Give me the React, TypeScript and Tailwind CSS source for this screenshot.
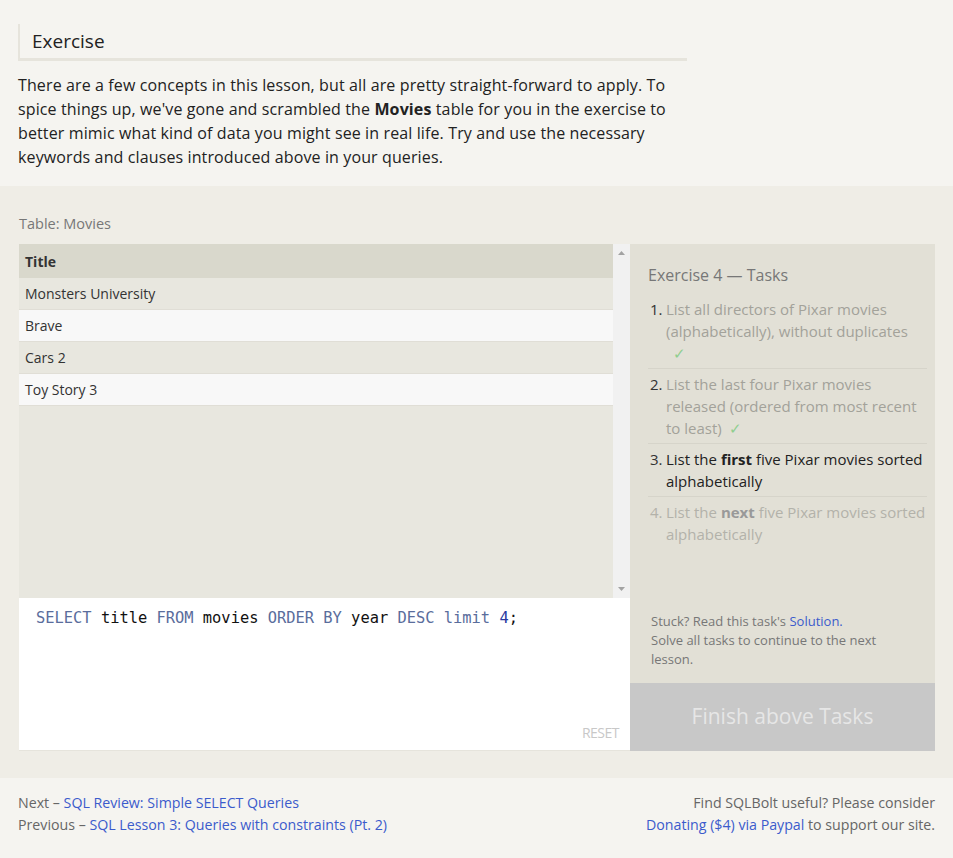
import React from "react";

const font = "font-['Open_Sans',sans-serif]";

export default function App() {
  return (
    <div className={`min-h-[858px] w-[953px] bg-[#efede6] ${font} text-[#222]`}>
      {/* Top intro */}
      <div className="h-[186px] bg-[#f5f4f0] px-[18px] pt-[24px]">
        <div className="w-[669px] border-l-[2px] border-b-[3px] border-[#e6e4dc] pl-[12px] pt-[4px] pb-[4px]">
          <h2 className="text-[19px] leading-[26px] text-[#222]">Exercise</h2>
        </div>
        <p className="mt-[12px] w-[672px] text-[16px] leading-[24px] tracking-[0.12px] text-[#222]">
          There are a few concepts in this lesson, but all are pretty straight-forward to apply. To spice things up, we've gone and scrambled the <b>Movies</b> table for you in the exercise to better mimic what kind of data you might see in real life. Try and use the necessary keywords and clauses introduced above in your queries.
        </p>
      </div>

      {/* Exercise widget */}
      <div className="px-[19px] pt-[28px] pb-[27px]">
        <div className="text-[14.5px] leading-[20px] text-[#777]">Table: Movies</div>
        <div className="mt-[10px] flex h-[507px] w-[916px]">
          {/* Left: table + editor */}
          <div className="flex w-[611px] flex-col">
            <div className="flex h-[354px] bg-[#e8e7df]">
              <div className="flex-1">
                <div className="flex h-[34px] items-center bg-[#d9d8cc] px-[6px] text-[14px] font-bold text-[#333]">Title</div>
                {["Monsters University", "Brave", "Cars 2", "Toy Story 3"].map((t, i) => (
                  <div
                    key={t}
                    className={`flex h-[32px] items-center border-b border-[#e0ded6] px-[6px] text-[14px] text-[#333] ${i % 2 === 0 ? "bg-[#e8e7df]" : "bg-[#f8f8f8]"}`}
                  >
                    {t}
                  </div>
                ))}
              </div>
              <div className="flex w-[17px] flex-col items-center justify-between bg-[#f1f1f1] py-[7px]">
                <svg width="7" height="4" viewBox="0 0 7 4"><path d="M3.5 0 L7 4 L0 4 Z" fill="#a3a3a3" /></svg>
                <svg width="7" height="4" viewBox="0 0 7 4"><path d="M0 0 L7 0 L3.5 4 Z" fill="#a3a3a3" /></svg>
              </div>
            </div>
            <div className="relative flex-1 border-b border-[#e6e4dc] bg-white">
              <div className="px-[17px] pt-[10px] font-['DejaVu_Sans_Mono',monospace] text-[15.4px] leading-[20px] whitespace-pre">
                <span className="text-[#5a6d9c]">SELECT</span>
                <span className="text-[#111]"> title </span>
                <span className="text-[#5a6d9c]">FROM</span>
                <span className="text-[#111]"> movies </span>
                <span className="text-[#5a6d9c]">ORDER BY</span>
                <span className="text-[#111]"> year </span>
                <span className="text-[#5a6d9c]">DESC</span>
                <span className="text-[#5a6d9c]"> limit </span>
                <span className="text-[#2a3aa0]">4</span>
                <span className="text-[#111]">;</span>
              </div>
              <div className="absolute right-[11px] bottom-[8px] text-[14px] leading-[18px] tracking-[-0.5px] text-[#c8c8c8]">RESET</div>
            </div>
          </div>
          {/* Right: tasks */}
          <div className="flex w-[305px] flex-col">
            <div className="flex flex-1 flex-col bg-[#e2e0d6] pl-[18px] pr-[8px]">
              <div className="pt-[20px] text-[16px] leading-[22px] text-[#777]">Exercise 4 — Tasks</div>
              <ol className="mt-[12px] text-[15px] leading-[22px]">
                <li className="flex border-b border-[#d6d4ca] pb-[4px]">
                  <span className="w-[18px] shrink-0 pl-[2px] text-[#333]">1.</span>
                  <span className="text-[#a3a29a]">List all directors of Pixar movies (alphabetically), without duplicates<br /><span className="ml-[7px] text-[#8fce8f]">✓</span></span>
                </li>
                <li className="flex border-b border-[#d6d4ca] pt-[4px] pb-[4px]">
                  <span className="w-[18px] shrink-0 pl-[2px] text-[#333]">2.</span>
                  <span className="text-[#a3a29a]">List the last four Pixar movies released (ordered from most recent to least) <span className="ml-[3px] text-[#8fce8f]">✓</span></span>
                </li>
                <li className="flex border-b border-[#d6d4ca] pt-[4px] pb-[4px]">
                  <span className="w-[18px] shrink-0 pl-[2px] text-[#333]">3.</span>
                  <span className="text-[#222]">List the <b>first</b> five Pixar movies sorted alphabetically</span>
                </li>
                <li className="flex pt-[4px]">
                  <span className="w-[18px] shrink-0 pl-[2px] text-[#b3b2aa]">4.</span>
                  <span className="text-[#b3b2aa]">List the <b className="text-[#999]">next</b> five Pixar movies sorted alphabetically</span>
                </li>
              </ol>
              <div className="mt-auto pb-[14px] pl-[3px] pr-[40px] text-[13px] leading-[19px] text-[#777]">
                Stuck? Read this task's <span className="text-[#3b5bcc]">Solution.</span>
                <br />
                Solve all tasks to continue to the next lesson.
              </div>
            </div>
            <div className="flex h-[68px] items-center justify-center bg-[#c8c8c8] text-[21px] text-[#e6e6e6]">
              Finish above Tasks
            </div>
          </div>
        </div>
      </div>

      {/* Footer */}
      <div className="flex justify-between bg-[#f5f4f0] px-[18px] pt-[14px] pb-[22px] text-[14.2px] leading-[22px] text-[#666]">
        <div>
          <div>Next – <span className="text-[#3b5bcc]">SQL Review: Simple SELECT Queries</span></div>
          <div>Previous – <span className="text-[#3b5bcc]">SQL Lesson 3: Queries with constraints (Pt. 2)</span></div>
        </div>
        <div className="text-right">
          <div>Find SQLBolt useful? Please consider</div>
          <div><span className="text-[#3b5bcc]">Donating ($4) via Paypal</span> to support our site.</div>
        </div>
      </div>
    </div>
  );
}
